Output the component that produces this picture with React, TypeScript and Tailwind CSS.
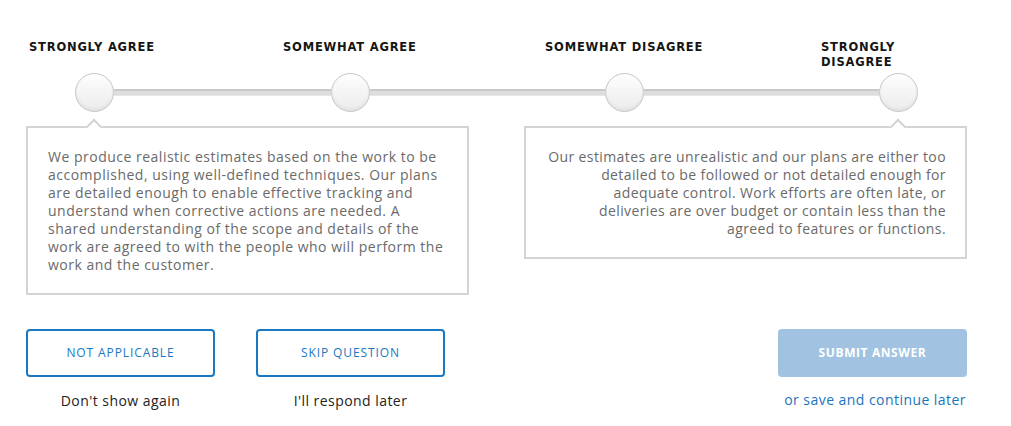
import React from 'react';

const labels = [
  { text: 'STRONGLY AGREE', w: 'w-[254px]' },
  { text: 'SOMEWHAT AGREE', w: 'w-[262px]' },
  { text: 'SOMEWHAT DISAGREE', w: 'w-[276px]' },
  { text: 'STRONGLY DISAGREE', w: 'w-[84px]' },
];

const Knob = () => (
  <div className="w-[39px] h-[39px] shrink-0 rounded-full border border-[#c6c6c6] bg-gradient-to-b from-[#fefefe] to-[#ebebeb] shadow-[inset_0_-2px_3px_rgba(0,0,0,0.05)]" />
);

const Track = ({ w }: { w: string }) => (
  <div className={`${w} h-[7px] shrink-0 bg-[#dddddd] border-t-2 border-[#c9c9c9] border-b border-b-[#e6e6e6]`} />
);

const Notch = ({ left }: { left: string }) => (
  <div
    className={`absolute ${left} -top-[7px] w-[12px] h-[12px] rotate-45 bg-white border-l-2 border-t-2 border-[#d4d4d4]`}
  />
);

export default function App() {
  return (
    <div className="w-[1011px] h-[426px] bg-white font-['Open_Sans',sans-serif] overflow-hidden">
      {/* scale labels */}
      <div className="flex items-start pl-[29px] pt-[40px] h-[73px]">
        {labels.map((l) => (
          <div key={l.text} className={`${l.w} shrink-0 font-['DejaVu_Sans',sans-serif] text-[11.5px] leading-[15px] font-bold tracking-[0.8px] text-[#151515]`}>
            {l.text}
          </div>
        ))}
      </div>

      {/* slider */}
      <div className="flex items-center pl-[75px] h-[39px]">
        <Knob />
        <Track w="w-[217px]" />
        <Knob />
        <Track w="w-[235px]" />
        <Knob />
        <Track w="w-[235px]" />
        <Knob />
      </div>

      {/* descriptions */}
      <div className="flex items-start pl-[26px] pt-[14px] gap-[55px]">
        <div className="relative w-[443px] border-2 border-[#d4d4d4] bg-white px-[20px] pt-[20px] pb-[19px] text-[14px] leading-[18px] tracking-[0.5px] text-[#6a6a6a] whitespace-nowrap">
          <Notch left="left-[60px]" />
          We produce realistic estimates based on the work to be<br />
          accomplished, using well-defined techniques. Our plans<br />
          are detailed enough to enable effective tracking and<br />
          understand when corrective actions are needed. A<br />
          shared understanding of the scope and details of the<br />
          work are agreed to with the people who will perform the<br />
          work and the customer.
        </div>
        <div className="relative w-[443px] border-2 border-[#d4d4d4] bg-white px-[19px] pt-[20px] pb-[19px] text-right text-[14px] leading-[18px] tracking-[0.4px] text-[#6a6a6a] whitespace-nowrap">
          <Notch left="left-[366px]" />
          Our estimates are unrealistic and our plans are either too<br />
          detailed to be followed or not detailed enough for<br />
          adequate control. Work efforts are often late, or<br />
          deliveries are over budget or contain less than the<br />
          agreed to features or functions.
        </div>
      </div>

      {/* actions */}
      <div className="flex items-start pl-[26px] pt-[34px]">
        <div className="flex flex-col items-center w-[189px]">
          <button className="w-[189px] h-[48px] rounded-[4px] border-2 border-[#1a78c2] text-[12px] text-[#1a78c2] tracking-[0.9px]">
            NOT APPLICABLE
          </button>
          <span className="mt-[13px] text-[14px] tracking-[0.45px] text-[#222]">Don't show again</span>
        </div>
        <div className="flex flex-col items-center w-[189px] ml-[41px]">
          <button className="w-[189px] h-[48px] rounded-[4px] border-2 border-[#1a78c2] text-[12px] text-[#1a78c2] tracking-[0.9px]">
            SKIP QUESTION
          </button>
          <span className="mt-[13px] text-[14px] tracking-[0.45px] text-[#222]">I'll respond later</span>
        </div>
        <div className="flex flex-col items-end w-[189px] ml-[333px]">
          <button className="w-[189px] h-[48px] rounded-[4px] bg-[#a1c3e1] text-[12px] font-bold text-white tracking-[0.6px]">
            SUBMIT ANSWER
          </button>
          <span className="mt-[12px] mr-[1px] text-[14px] tracking-[0.45px] text-[#1a75bb]">or save and continue later</span>
        </div>
      </div>
    </div>
  );
}
